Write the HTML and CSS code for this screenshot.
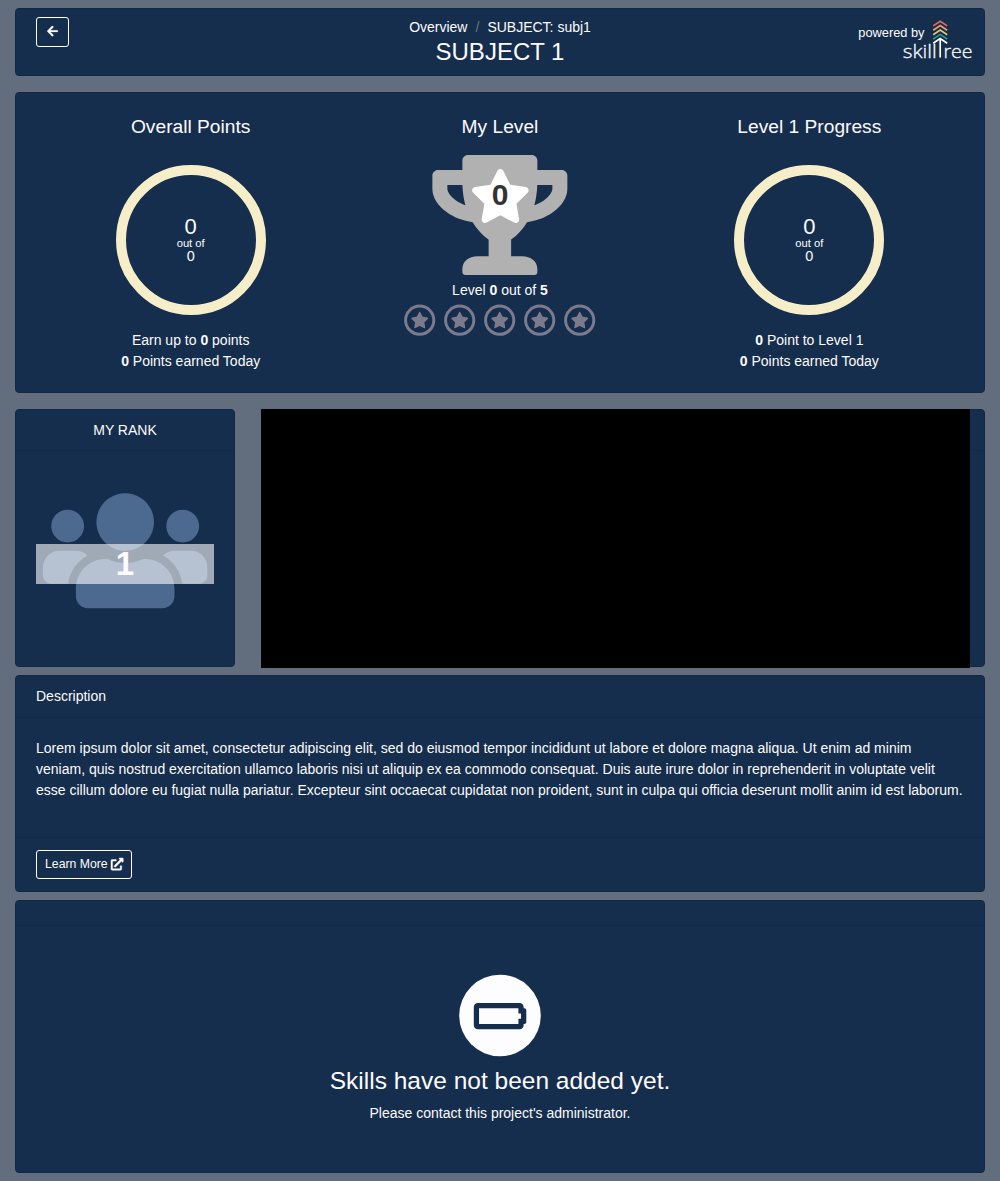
FILE: index.html
```html
<!DOCTYPE html>
<html lang="en">
<head>
<meta charset="utf-8">
<title>SUBJECT 1</title>
<link rel="stylesheet" href="styles.css">
</head>
<body>
<svg class="defs" width="0" height="0">
  <symbol id="star" viewBox="0 0 576 512"><path d="M259.3 17.8L194 150.2 47.9 171.5c-26.2 3.8-36.7 36.1-17.7 54.6l105.7 103-25 145.5c-4.5 26.3 23.2 46 46.4 33.7L288 439.6l130.7 68.7c23.2 12.2 50.9-7.4 46.4-33.7l-25-145.5 105.7-103c19-18.5 8.5-50.8-17.7-54.6L382 150.2 316.7 17.8c-11.7-23.6-45.6-23.9-57.4 0z"/></symbol>
  <symbol id="badge" viewBox="0 0 32 32"><circle cx="15.7" cy="16.2" r="14.1" fill="none" stroke="currentColor" stroke-width="3"/><path d="M15.7 8.8l2.3 4.7 5.2.8-3.8 3.8.9 5.2-4.6-2.4-4.6 2.4.9-5.2-3.8-3.8 5.2-.8z" stroke="currentColor" stroke-width="1.8" stroke-linejoin="round"/></symbol>
</svg>
<main class="page">
  <header class="card top">
    <div class="side"><button class="btn back" aria-label="Back"><svg width="11" height="12.25" viewBox="0 0 448 512"><path stroke="currentColor" stroke-width="8" d="M257.5 445.1l-22.2 22.2c-9.4 9.4-24.6 9.4-33.9 0L7 273c-9.4-9.4-9.4-24.6 0-33.9L201.4 44.7c9.4-9.4 24.6-9.4 33.9 0l22.2 22.2c9.5 9.5 9.3 25-.4 34.3L136.6 216H424c13.3 0 24 10.7 24 24v32c0 13.3-10.7 24-24 24H136.6l120.5 114.8c9.8 9.3 10 24.8.4 34.3z"/></svg></button></div>
    <div class="heading">
      <nav class="crumbs"><span>Overview</span><span class="slash">/</span><span>SUBJECT: subj1</span></nav>
      <h1>SUBJECT 1</h1>
    </div>
    <div class="side brand">
      <span class="powered">powered by</span>
      <svg class="logo" width="74" height="50" viewBox="0 0 74 50">
        <g fill="none" stroke-width="1.7">
          <path d="M31.2 8.9L38.2 4.2l7 4.7" stroke="#d9705c"/>
          <path d="M31.2 13.3l7-4.7 7 4.7" stroke="#eda065"/>
          <path d="M31.2 17.7l7-4.7 7 4.7" stroke="#e5c46c"/>
          <path d="M31.2 22.1l7-4.7 7 4.7" stroke="#2c9c8f"/>
          <path d="M31.2 26.2l7-4.7 7 4.7M38.2 22v18.5" stroke="#fff"/>
        </g>
        <text x="0.7" y="40.7" textLength="34" lengthAdjust="spacingAndGlyphs">skill</text>
        <text x="41.4" y="40.7" textLength="29.2" lengthAdjust="spacingAndGlyphs">ree</text>
      </svg>
    </div>
  </header>

  <section class="card stats">
    <div class="stat">
      <h2>Overall Points</h2>
      <div class="ring"><span class="big">0</span><span class="small">out of</span><span>0</span></div>
      <p>Earn up to <b>0</b> points</p>
      <p><b>0</b> Points earned Today</p>
    </div>
    <div class="stat">
      <h2>My Level</h2>
      <div class="trophy">
        <svg width="135.5" height="120" viewBox="-1 0 577 512"><path d="M552 64H448V24c0-13.3-10.7-24-24-24H152c-13.3 0-24 10.7-24 24v40H24C10.7 64 0 74.7 0 88v56c0 35.7 22.5 72.4 61.9 100.7 31.5 22.7 69.8 37.1 110 41.7C203.3 338.5 240 360 240 360v72h-48c-35.3 0-64 20.7-64 56v12c0 6.6 5.4 12 12 12h296c6.6 0 12-5.4 12-12v-12c0-35.3-28.7-56-64-56h-48v-72s36.7-21.5 68.1-73.6c40.3-4.6 78.6-19 110-41.7 39.3-28.3 61.9-65 61.9-100.7V88c0-13.3-10.7-24-24-24zM99.3 192.8C74.9 175.2 64 155.6 64 144v-16h64.2c1 32.6 5.8 61.2 12.8 86.2-15.1-5.2-29.2-12.4-41.7-21.4zM512 144c0 16.1-17.7 36.1-35.3 48.8-12.5 9-26.7 16.2-41.8 21.4 7-25 11.8-53.6 12.8-86.2H512v16z"/></svg>
        <svg class="trophy-star" width="60.75" height="54"><use href="#star"/></svg>
        <strong class="trophy-level">0</strong>
      </div>
      <p class="level">Level <b>0</b> out of <b>5</b></p>
      <div class="badges">
        <svg><use href="#badge"/></svg><svg><use href="#badge"/></svg><svg><use href="#badge"/></svg><svg><use href="#badge"/></svg><svg><use href="#badge"/></svg>
      </div>
    </div>
    <div class="stat">
      <h2>Level 1 Progress</h2>
      <div class="ring"><span class="big">0</span><span class="small">out of</span><span>0</span></div>
      <p><b>0</b> Point to Level 1</p>
      <p><b>0</b> Points earned Today</p>
    </div>
  </section>

  <div class="row">
    <section class="card rank">
      <div class="card-head">MY RANK</div>
      <div class="rank-body">
        <svg width="164.4" height="131.5" viewBox="0 0 640 512"><path d="M96 224c35.3 0 64-28.7 64-64s-28.7-64-64-64-64 28.7-64 64 28.7 64 64 64zm448 0c35.3 0 64-28.7 64-64s-28.7-64-64-64-64 28.7-64 64 28.7 64 64 64zm32 32h-64c-17.6 0-33.5 7.1-45.1 18.6 40.3 22.1 68.9 62 75.1 109.4h66c17.7 0 32-14.3 32-32v-32c0-35.3-28.7-64-64-64zm-256 0c61.9 0 112-50.1 112-112S381.9 32 320 32 208 82.1 208 144s50.1 112 112 112zm76.8 32h-8.3c-20.8 10-43.9 16-68.5 16s-47.6-6-68.5-16h-8.3C179.6 288 128 339.6 128 403.2V432c0 26.5 21.5 48 48 48h288c26.5 0 48-21.5 48-48v-28.8c0-63.6-51.6-115.2-115.2-115.2zm-223.7-13.4C161.5 263.1 145.6 256 128 256H64c-35.3 0-64 28.7-64 64v32c0 17.7 14.3 32 32 32h65.9c6.3-47.4 34.9-87.3 75.2-109.4z"/></svg>
        <strong class="rank-value">1</strong>
      </div>
    </section>
    <section class="card chart">
      <div class="card-head"></div>
      <div class="mask"></div>
    </section>
  </div>

  <section class="card description">
    <div class="card-head">Description</div>
    <p class="text">Lorem ipsum dolor sit amet, consectetur adipiscing elit, sed do eiusmod tempor incididunt ut labore et dolore magna aliqua. Ut enim ad minim veniam, quis nostrud exercitation ullamco laboris nisi ut aliquip ex ea commodo consequat. Duis aute irure dolor in reprehenderit in voluptate velit esse cillum dolore eu fugiat nulla pariatur. Excepteur sint occaecat cupidatat non proident, sunt in culpa qui officia deserunt mollit anim id est laborum.</p>
    <div class="card-foot"><button class="btn more">Learn More <svg width="12.25" height="12.25" viewBox="0 0 512 512"><path stroke="currentColor" stroke-width="18" d="M432,320H400a16,16,0,0,0-16,16V448H64V128H208a16,16,0,0,0,16-16V80a16,16,0,0,0-16-16H48A48,48,0,0,0,0,112V464a48,48,0,0,0,48,48H400a48,48,0,0,0,48-48V336A16,16,0,0,0,432,320ZM488,0h-128c-21.37,0-32.05,25.91-17,41l35.73,35.73L135,320.37a24,24,0,0,0,0,34L157.67,377a24,24,0,0,0,34,0L435.28,133.32,471,169c15,15,41,4.5,41-17V24A24,24,0,0,0,488,0Z"/></svg></button></div>
  </section>

  <section class="card skills">
    <div class="skills-head"></div>
    <div class="empty">
      <svg width="82" height="83" viewBox="0 -.5 82 83"><circle cx="41" cy="41" r="40.8" fill="#fdfdff"/><path fill="#152e4d" transform="translate(14.8 20.6) scale(.082)" d="M544 160v64h32v64h-32v64H64V160h480m16-64H48c-26.5 0-48 21.5-48 48v224c0 26.5 21.5 48 48 48h512c26.5 0 48-21.5 48-48v-16h8c13.3 0 24-10.7 24-24V184c0-13.3-10.7-24-24-24h-8v-16c0-26.5-21.5-48-48-48z"/></svg>
      <h3>Skills have not been added yet.</h3>
      <p>Please contact this project's administrator.</p>
    </div>
  </section>
</main>
</body>
</html>
```
FILE: styles.css
```css
* { box-sizing: border-box; }
body {
  margin: 0;
  background: #626d7d;
  color: #fdfbfb;
  font: 14px/21px "Liberation Sans", Arial, sans-serif;
}
h1, h2, h3, p { margin: 0; font-weight: 400; }
svg { display: block; fill: currentColor; overflow: visible; }
.defs { position: absolute; }
.page { padding: 8px 15px; }
.card {
  background: #152e4d;
  border: 1px solid #132943;
  border-radius: 4px;
}
.card-head {
  height: 41px;
  padding: 10px 20px;
  border-bottom: 1px solid #132943;
}
.btn {
  display: flex;
  align-items: center;
  border: 1px solid #fff;
  border-radius: 3px;
  background: none;
  color: inherit;
  font: 12.25px/18px "Liberation Sans", Arial, sans-serif;
}

.top {
  display: grid;
  grid-template-columns: 1fr 200px 1fr;
  height: 68px;
  margin-bottom: 16px;
}
.side { padding: 8px 20px; }
.back { width: 33px; height: 30px; padding: 0 0 1px 10px; }
.heading { text-align: center; padding-top: 8px; }
.crumbs { display: flex; justify-content: center; }
.slash { color: #6c757d; padding: 0 8px; }
h1 { font-size: 24px; line-height: 27px; }
.brand { display: flex; justify-content: flex-end; padding: 8px 8px 0 0; }
.powered { font-size: 12.8px; line-height: 31px; margin-right: -22.5px; }
.logo text { font: 300 19px "Open Sans", sans-serif; stroke: currentColor; stroke-width: .3; }

.stats {
  display: grid;
  grid-template-columns: repeat(3, 309.33px);
  justify-content: center;
  height: 301px;
  margin-bottom: 16px;
  padding-top: 22px;
}
.stat { display: flex; flex-direction: column; align-items: center; }
h2 { font-size: 19.2px; line-height: 24px; }
.ring {
  display: flex;
  flex-direction: column;
  align-items: center;
  width: 150px;
  height: 150px;
  margin: 26px 0 15px;
  padding-top: 40px;
  border: 10px solid #f6eec8;
  border-radius: 50%;
  font-size: 14.4px;
  line-height: 14px;
}
.big { font-size: 22px; line-height: 23px; }
.small { font-size: 11.2px; line-height: 11px; }
.trophy { position: relative; margin-top: 16px; color: #b1b1b1; }
.trophy-star { position: absolute; left: 37.4px; top: 13.5px; color: #fff; }
.trophy-level {
  position: absolute;
  inset: 25px 0 auto;
  text-align: center;
  color: #333;
  font-size: 30px;
  line-height: 30px;
}
.level { margin-top: 5px; }
.badges { display: flex; gap: 8px; margin-top: 3px; color: #7c7b8b; }
.badges svg { width: 32px; height: 32px; }

.row { display: flex; gap: 26px; height: 258px; margin-bottom: 8px; }
.rank { width: 220px; text-align: center; }
.rank-body { position: relative; padding: 34px 0 0 26.8px; color: #4c698f; }
.rank-value {
  position: absolute;
  left: 20px;
  right: 20px;
  top: 93px;
  height: 40px;
  background: rgba(253, 253, 253, .6);
  color: #fdfbfb;
  font-size: 33px;
  line-height: 39px;
}
.chart { position: relative; flex: 1; }
.mask { position: absolute; left: -1px; top: -1px; width: 709px; height: 259px; background: #000; }

.description { height: 217px; margin-bottom: 8px; }
.description .card-head { height: 42px; }
.text { height: 119px; padding: 20px; }
.card-foot { padding: 12px 20px; border-top: 1px solid #132943; }
.more { height: 29px; padding: 0 7.5px 1px 8px; gap: 3.5px; }

.skills { height: 273px; }
.skills-head { height: 25px; border-bottom: 1px solid #132943; }
.empty { display: flex; flex-direction: column; align-items: center; padding-top: 48px; }
h3 { font-size: 24.5px; line-height: 29px; margin: 9px 0 8px; }
```
